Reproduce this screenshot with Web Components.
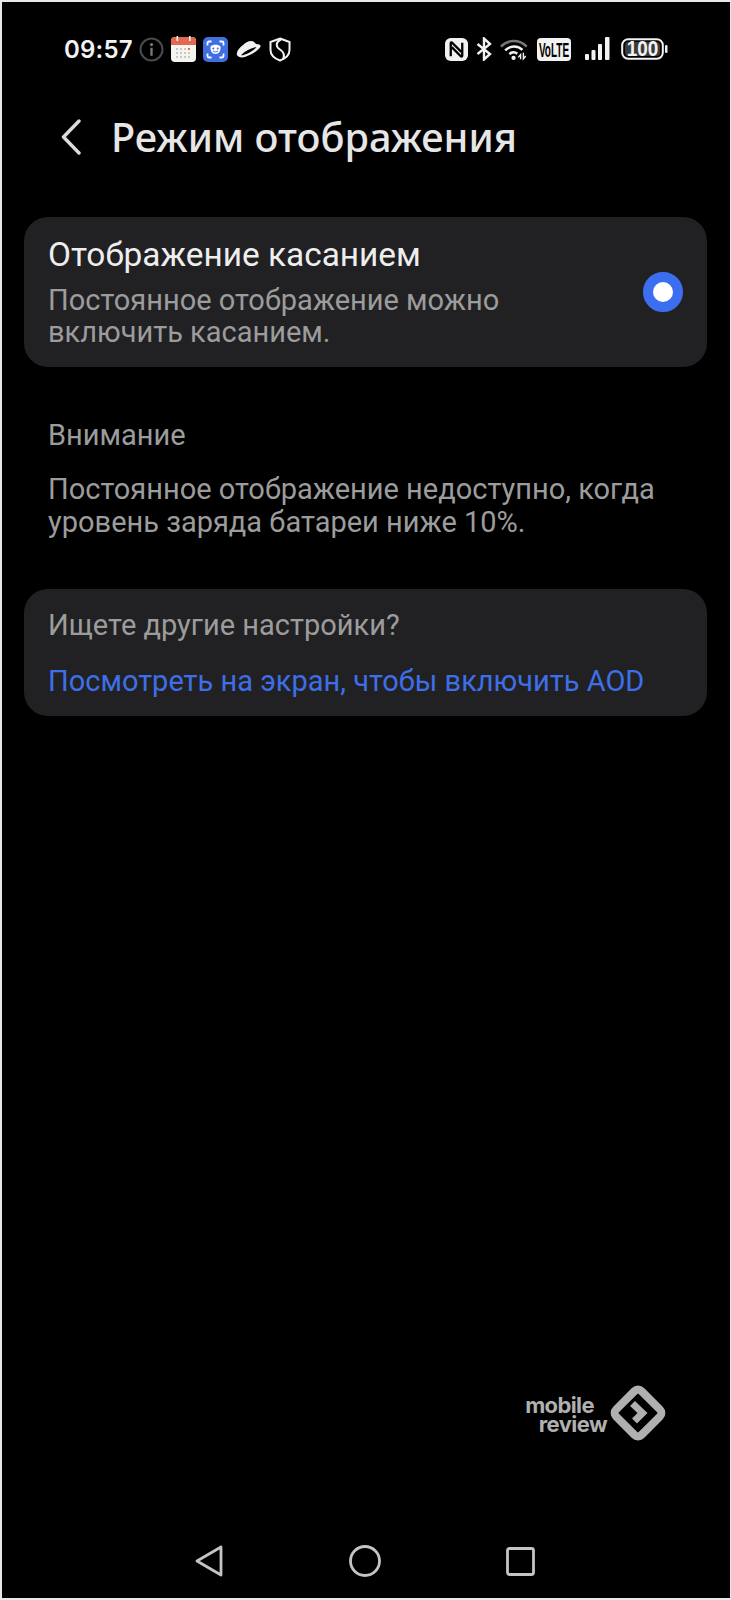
<!DOCTYPE html>
<html lang="ru">
<head>
<meta charset="utf-8">
<title>Режим отображения</title>
<style>
    html, body { margin: 0; background: #000; }
    body { height: 1600px; box-sizing: border-box; border: solid #e8e8e8; border-width: 2px 1px 2px 2px; overflow: hidden; font-family: Roboto, "Noto Sans", sans-serif; }
    screen-page { height: 100%; }
</style>
</head>
<body>
<screen-page>
    <status-bar></status-bar>
    <title-bar>Режим отображения</title-bar>
    <option-card heading="Отображение касанием">Постоянное отображение можно<br>включить касанием.</option-card>
    <note-block heading="Внимание">Постоянное отображение недоступно, когда<br>уровень заряда батареи ниже 10%.</note-block>
    <link-card heading="Ищете другие настройки?">Посмотреть на экран, чтобы включить AOD</link-card>
    <brand-mark></brand-mark>
    <nav-bar></nav-bar>
</screen-page>
<script>
class ScreenPage extends HTMLElement {
    constructor() {
        super();
        this.attachShadow({ mode: 'open' }).innerHTML = `
            <style>
                :host { display: flex; flex-direction: column; }
            </style>
            <slot></slot>
        `;
    }
}

class StatusBar extends HTMLElement {
    constructor() {
        super();
        this.attachShadow({ mode: 'open' }).innerHTML = `
            <style>
                :host { display: flex; align-items: center; height: 26px; margin-top: 34px; padding: 0 62px 0 62px; color: #f2f2f2; }
                .time { font: 600 24px "Inter", sans-serif; letter-spacing: .2px; margin-right: 6px; }
                .left, .right { display: flex; align-items: center; }
                .right { margin-left: auto; }
                svg { display: block; }
            </style>
            <div class="left">
                <span class="time">09:57</span>
                <svg width="25" height="25" viewBox="0 0 25 25" fill="none"><circle cx="12.5" cy="12.5" r="11" stroke="#4a4a4a" stroke-width="2"/><circle cx="12.5" cy="7.6" r="1.6" fill="#777"/><rect x="11.3" y="10.8" width="2.4" height="8" fill="#777"/></svg>
                <svg width="25" height="26" viewBox="0 0 25 26" style="margin-left:7px"><rect y="1" width="25" height="25" rx="4" fill="#f4f4f0"/><path d="M0 9V5a4 4 0 0 1 4-4h17a4 4 0 0 1 4 4v4z" fill="#e2684f"/><rect x="5.5" y="0" width="1.6" height="5" fill="#f4f4f0"/><rect x="18" y="0" width="1.6" height="5" fill="#f4f4f0"/><g fill="#c8c8c8"><rect x="5" y="12" width="2" height="2"/><rect x="9" y="12" width="2" height="2"/><rect x="13" y="12" width="2" height="2"/><rect x="5" y="16" width="2" height="2"/><rect x="9" y="16" width="2" height="2"/><rect x="13" y="16" width="2" height="2"/><rect x="17" y="16" width="2" height="2"/><rect x="5" y="20" width="2" height="2"/><rect x="9" y="20" width="2" height="2"/><rect x="13" y="20" width="2" height="2"/><rect x="17" y="20" width="2" height="2"/></g><rect x="17" y="12" width="2" height="2" fill="#e2684f"/></svg>
                <svg width="25" height="25" viewBox="0 0 25 25" fill="none" style="margin-left:7px"><rect width="25" height="25" rx="5" fill="#3f6fe0"/><path d="M4.500 8.500V6A1.500 1.500 0 0 1 6 4.500h2.500M16.500 4.500H19A1.500 1.500 0 0 1 20.500 6v2.500M4.500 16.500V19A1.500 1.500 0 0 0 6 20.500h2.500M16.500 20.500H19a1.500 1.500 0 0 0 1.500-1.500v-2.500" stroke="#fff" stroke-width="1.800"/><path d="M7.500 9.500c2-2.500 8-2.500 10 0 .5 4-1.500 7.500-5 7.500s-5.500-3.500-5-7.500z" fill="#fff"/><circle cx="10.300" cy="11.500" r="1" fill="#3f6fe0"/><circle cx="14.700" cy="11.500" r="1" fill="#3f6fe0"/><path d="M10 14c1.500 1.200 3.500 1.200 5 0" stroke="#3f6fe0" stroke-width="1"/></svg>
                <svg width="25" height="18" viewBox="0 0 25 18" style="margin-left:8px"><path d="M1 15C0 12 3 8 7 5c2-2 5-4 8-4s4 2 5 3c3 0 5 1 4.500 2.500C24 9 16 15 9 17c-4 1-7 0-8-2z" fill="#f2f2f2"/><path d="M5 15.300C9 11 15 8 20.500 7 18 10.500 10 15 5 15.300z" fill="#000"/></svg>
                <svg width="22" height="25" viewBox="0 0 22 25" fill="none" style="margin-left:8px"><path d="M11 1.500 20.500 5v8c0 5-4 8.500-9.500 10.500C5.500 21.500 1.500 18 1.500 13V5z" stroke="#f2f2f2" stroke-width="2"/><path d="M12 2.500C6.500 5 6.500 9.500 11 12.500c4 2.700 5 6 3 10" stroke="#f2f2f2" stroke-width="2"/></svg>
            </div>
            <div class="right">
                <svg width="23" height="23" viewBox="0 0 24 24"><rect width="24" height="24" rx="6" fill="#f2f2f2"/><path d="M6 19V5.500c0-1 1-1 1.500-.5L17 14.500M18 5v13.500c0 1-1 1-1.500.5L7 9.500" fill="none" stroke="#000" stroke-width="2.400"/></svg>
                <svg width="16" height="24" viewBox="0 0 16 24" fill="none" style="margin-left:8px"><path d="M1.500 7 14 17l-6 5.500V1.500L14 7 1.500 17" stroke="#f2f2f2" stroke-width="2.400"/></svg>
                <svg width="29" height="24" viewBox="0 0 31 24" fill="none" style="margin-left:8px"><path d="M1 9.500C8 1.500 21 1.500 28.500 9.500" stroke="#777" stroke-width="2.600"/><path d="M5.500 13.500C11 8 19 8 24 13" stroke="#f2f2f2" stroke-width="2.600"/><path d="M10 17.500c2.500-2.500 6-2.500 8.500-.5" stroke="#f2f2f2" stroke-width="2.600"/><circle cx="14.500" cy="21.500" r="2.300" fill="#f2f2f2"/><path d="M22 23v-5l-2.500 3M25 16v6.500l2.500-3" stroke="#f2f2f2" stroke-width="1.500"/></svg>
                <svg width="34" height="23" viewBox="0 0 34 23" style="margin-left:8px"><rect width="34" height="23" rx="4" fill="#f2f2f2"/><text transform="translate(17 18.500) scale(1 2)" text-anchor="middle" font-family="Liberation Sans" font-weight="700" font-size="10" fill="#000">VoLTE</text></svg>
                <svg width="27" height="24" viewBox="0 0 27 24" style="margin-left:14px" fill="#f2f2f2"><rect x="0" y="17" width="4" height="6" rx="1"/><rect x="6.500" y="13" width="4" height="10" rx="1"/><rect x="13" y="7" width="4" height="16" rx="1"/><rect x="20" y="0" width="4.500" height="23" rx="1"/></svg>
                <svg width="47" height="24" viewBox="0 0 47 24" style="margin-left:9px" fill="none"><rect x="1.200" y="2.200" width="40.600" height="19.600" rx="6" stroke="#f2f2f2" stroke-width="2"/><rect x="4" y="5" width="35" height="14" rx="3.500" fill="#3a3a3a"/><text transform="translate(21.500 18.800) scale(1 1.150)" text-anchor="middle" font-family="Liberation Sans" font-weight="700" font-size="19" fill="#f2f2f2">100</text><rect x="44" y="8" width="2.500" height="8" rx="1.200" fill="#f2f2f2"/></svg>
            </div>
        `;
    }
}

class TitleBar extends HTMLElement {
    constructor() {
        super();
        this.attachShadow({ mode: 'open' }).innerHTML = `
            <style>
                :host { display: flex; align-items: center; height: 60px; margin-top: 45px; padding-left: 59px; margin-bottom: 50px; }
                svg { display: block; flex: none; }
                .t { margin-left: 30px; font: 500 39.700px "Noto Sans", sans-serif; color: #e6e6e6; white-space: nowrap; }
            </style>
            <svg width="20" height="36" viewBox="0 0 20 36" fill="none"><path d="M18 2 2.500 18 18 34" stroke="#dcdcdc" stroke-width="3.400" stroke-linecap="round" stroke-linejoin="round"/></svg>
            <span class="t"><slot></slot></span>
        `;
    }
}

class OptionCard extends HTMLElement {
    constructor() {
        super();
        this.attachShadow({ mode: 'open' }).innerHTML = `
            <style>
                :host { display: flex; align-items: center; margin: 0 23px 0 22px; height: 150px; box-sizing: border-box; padding: 0 24px; background: #212123; border-radius: 24px; }
                .text { flex: 1; padding-bottom: 1px; }
                .h { font-size: 33.400px; line-height: 38px; color: #eeeeee; }
                .s { font-size: 29px; line-height: 32px; color: #9c9c9c; margin-top: 10px; }
                .radio { width: 40px; height: 40px; box-sizing: border-box; border: 10px solid #3c6ff0; background: #fff; border-radius: 50%; flex: none; }
            </style>
            <div class="text">
                <div class="h"></div>
                <div class="s"><slot></slot></div>
            </div>
            <div class="radio"></div>
        `;
        this.shadowRoot.querySelector('.h').textContent = this.getAttribute('heading');
    }
}

class NoteBlock extends HTMLElement {
    constructor() {
        super();
        this.attachShadow({ mode: 'open' }).innerHTML = `
            <style>
                :host { display: block; padding: 50px 46px 0; color: #9c9c9c; font-size: 29px; white-space: nowrap; }
                .h { line-height: 36px; }
                .b { line-height: 33px; margin-top: 20px; }
            </style>
            <div class="h"></div>
            <div class="b"><slot></slot></div>
        `;
        this.shadowRoot.querySelector('.h').textContent = this.getAttribute('heading');
    }
}

class LinkCard extends HTMLElement {
    constructor() {
        super();
        this.attachShadow({ mode: 'open' }).innerHTML = `
            <style>
                :host { display: block; margin: 50px 23px 0 22px; height: 127px; box-sizing: border-box; padding: 18px 24px 0; background: #212123; border-radius: 24px; font-size: 29px; }
                .h { color: #9c9c9c; line-height: 36px; }
                .l { color: #3e6fe8; line-height: 36px; margin-top: 20px; white-space: nowrap; }
            </style>
            <div class="h"></div>
            <div class="l"><slot></slot></div>
        `;
        this.shadowRoot.querySelector('.h').textContent = this.getAttribute('heading');
    }
}

class BrandMark extends HTMLElement {
    constructor() {
        super();
        this.attachShadow({ mode: 'open' }).innerHTML = `
            <style>
                :host { display: flex; align-items: center; justify-content: flex-end; margin-top: auto; padding-right: 64px; color: #b0b0b0; }
                .w { font: 700 22px/19px "Inter", sans-serif; letter-spacing: -.6px; margin: 4px 3px 0 0; display: flex; flex-direction: column; align-items: flex-end; }
                .w span:first-child { margin-right: 13px; }
                svg { display: block; }
            </style>
            <div class="w"><span>mobile</span><span>review</span></div>
            <svg width="56" height="56" viewBox="0 0 56 56" fill="none"><rect x="10" y="10" width="36" height="36" rx="5" transform="rotate(45 28 28)" stroke="#b0b0b0" stroke-width="8"/><path d="M22.500 18.500 32.500 28 24.500 36" stroke="#b0b0b0" stroke-width="7"/></svg>
        `;
    }
}

class NavBar extends HTMLElement {
    constructor() {
        super();
        this.attachShadow({ mode: 'open' }).innerHTML = `
            <style>
                :host { display: flex; align-items: center; justify-content: space-between; height: 34px; margin: 103px 0 20px; padding: 0 195px 0 192px; }
                svg { display: block; }
            </style>
            <svg width="30" height="34" viewBox="0 0 30 34" fill="none"><path d="M27 3 3 17l24 14z" stroke="#c4c4c4" stroke-width="2.800" stroke-linejoin="round"/></svg>
            <svg width="32" height="32" viewBox="0 0 32 32" fill="none"><circle cx="16" cy="16" r="14.500" stroke="#c4c4c4" stroke-width="2.800"/></svg>
            <svg width="29" height="29" viewBox="0 0 29 29" fill="none"><rect x="1.500" y="1.500" width="26" height="26" rx="2" stroke="#c4c4c4" stroke-width="2.800"/></svg>
        `;
    }
}

customElements.define('screen-page', ScreenPage);
customElements.define('status-bar', StatusBar);
customElements.define('title-bar', TitleBar);
customElements.define('option-card', OptionCard);
customElements.define('note-block', NoteBlock);
customElements.define('link-card', LinkCard);
customElements.define('brand-mark', BrandMark);
customElements.define('nav-bar', NavBar);
</script>
</body>
</html>
